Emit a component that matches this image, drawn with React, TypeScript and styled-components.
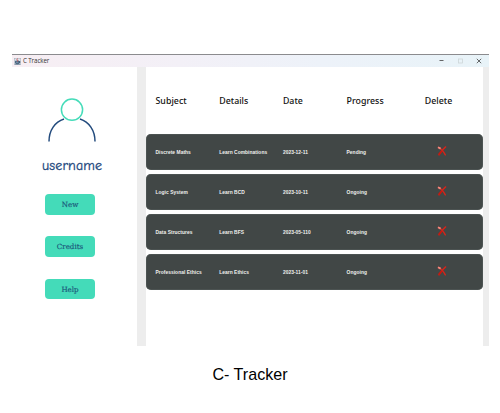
import React from "react";
import styled, { createGlobalStyle } from "styled-components";

const GlobalStyle = createGlobalStyle`
  * { box-sizing: border-box; }
  body { margin: 0; background: #fff; }
`;

const Page = styled.div`
  width: 500px;
  height: 413px;
  padding: 54px 11px 0 12px;
  overflow: hidden;
  background: #fff;
  font-family: "Liberation Sans", sans-serif;
`;

const Window = styled.div`
  width: 477px;
  height: 292px;
  display: flex;
  flex-direction: column;
`;

const TitleBar = styled.header`
  height: 13px;
  flex: none;
  display: flex;
  align-items: center;
  padding: 0 7px 0 2px;
  border-top: 1px solid #8b8b8e;
  background: linear-gradient(90deg, #f7eef3 0%, #f3f0f7 35%, #edf2f9 65%, #e8f3f8 100%);
`;

const Title = styled.span`
  flex: 1;
  margin-left: 2px;
  font: 6.2px/12px "Open Sans", sans-serif;
  letter-spacing: -0.1px;
  color: #333;
`;

const Controls = styled.div`
  display: flex;
  gap: 13.5px;
  svg { display: block; }
`;

const Body = styled.div`
  flex: 1;
  display: flex;
  background: #ededed;
`;

const Sidebar = styled.aside`
  width: 125px;
  display: flex;
  flex-direction: column;
  align-items: flex-start;
  padding: 30px 0 0 33px;
  background: #fff;
`;

const Avatar = styled.svg`
  display: block;
  margin-left: 2px;
`;

const Username = styled.div`
  width: 62px;
  margin: 15px 0 19.3px -3px;
  font: 400 14px/18px "Comic Sans MS", "Comic Neue", "Noto Sans", sans-serif;
  letter-spacing: 0.15px;
  -webkit-text-stroke: 0.3px #1d477c;
  white-space: nowrap;
  color: #1d477c;
`;

const Menu = styled.nav`
  display: flex;
  flex-direction: column;
  gap: 21.7px;
`;

const MenuButton = styled.button`
  width: 50px;
  height: 20.5px;
  padding: 0;
  border: 0;
  border-radius: 4px;
  background: #44dbb9;
  color: #1b567a;
  -webkit-text-stroke: 0.15px #1b567a;
  font: 7.1px/21px "Century Schoolbook", "DejaVu Serif", serif;
`;

const Main = styled.main`
  width: 337px;
  margin-left: 9px;
  display: flex;
  flex-direction: column;
  gap: 4px;
  background: #fff;
`;

const gridColumns = "63.7px 63.7px 63.7px 63.7px 1fr";

const HeaderRow = styled.div`
  height: 63px;
  display: grid;
  grid-template-columns: ${gridColumns};
  padding: 26px 0 0 9.5px;
  font: 500 8.8px/16px "Noto Sans", sans-serif;
  letter-spacing: 0.03px;
  color: #111;
`;

const HeaderCell = styled.span<{ $last?: boolean }>`
  padding-left: ${(p) => (p.$last ? "14.5px" : "0")};
`;

const TaskRow = styled.div`
  height: 36px;
  display: grid;
  grid-template-columns: ${gridColumns};
  align-items: center;
  padding-left: 9.5px;
  border-radius: 5px;
  background: #414746;
  box-shadow: inset 0 0 0 0.5px #59605e;
  font: bold 4.9px/8px "Liberation Sans", sans-serif;
  letter-spacing: 0.04px;
  color: #f0f0ee;
`;

const TaskCell = styled.span`
  padding-top: 1.5px;
  white-space: nowrap;
`;

const DeleteIcon = styled.svg`
  display: block;
  margin: -2px 0 0 26.5px;
`;

const Caption = styled.div`
  margin-top: 18px;
  padding-right: 1px;
  text-align: center;
  font-size: 16.1px;
  line-height: 20px;
  color: #000;
`;

const tasks = [
  ["Discrete Maths", "Learn Combinations", "2023-12-11", "Pending"],
  ["Logic System", "Learn BCD", "2023-10-11", "Ongoing"],
  ["Data Structures", "Learn BFS", "2023-05-110", "Ongoing"],
  ["Professional Ethics", "Learn Ethics", "2023-11-01", "Ongoing"],
];

const headers = ["Subject", "Details", "Date", "Progress", "Delete"];

function JavaIcon() {
  return (
    <svg width="7" height="7" viewBox="0 0 14 14" fill="none">
      <rect x="0.5" y="0.5" width="13" height="13" fill="#dfe5eb" stroke="#9daab7" />
      <path d="M3 6h7v4c0 2-6 2-7 0V6zM10 7h2v2h-2M2 12h10" fill="#718ca4" stroke="#304e6b" strokeWidth="1.4" />
      <path d="M7 1c-3 3 2 3 0 6" stroke="#d04445" strokeWidth="1.7" />
    </svg>
  );
}

function CrossIcon() {
  return (
    <DeleteIcon width="10" height="10" viewBox="0 0 10 10" fill="none">
      <path d="M8.6.9C6.2 3 3.8 5.8 2 8.8" stroke="#d3251a" strokeWidth="1.4" strokeLinecap="round" />
      <path d="M1.4 1.4C3.5 2.3 6.2 5 8.3 8.9" stroke="#d3251a" strokeWidth="1.4" strokeLinecap="round" />
      <path d="M4.7 5.1 1.6 8.9" stroke="#c01b12" strokeWidth="2" />
      <path d="M1 1.3 3.6 2.6" stroke="#f38a80" strokeWidth="1.8" />
    </DeleteIcon>
  );
}

export default function App() {
  return (
    <Page>
      <GlobalStyle />
      <Window>
        <TitleBar>
          <JavaIcon />
          <Title>C Tracker</Title>
          <Controls>
            <svg width="5" height="6" viewBox="0 0 5 6"><path d="M.5 2.5h4" stroke="#555" strokeWidth=".9" /></svg>
            <svg width="5" height="6" viewBox="0 0 5 6"><rect x=".5" y="1" width="4" height="4" fill="none" stroke="#cdd5d8" strokeWidth=".8" /></svg>
            <svg width="6" height="6" viewBox="0 0 6 6"><path d="m.8.8 4.4 4.4M5.2.8.8 5.2" stroke="#444" strokeWidth=".8" /></svg>
          </Controls>
        </TitleBar>
        <Body>
          <Sidebar>
            <Avatar width="50" height="45" viewBox="0 0 50 45" fill="none">
              <path d="M2 44.5C2 33 8 25 17 22M33 22c9 3 15 11 15 22.5" stroke="#234b7d" strokeWidth="1.5" />
              <circle cx="25" cy="12.7" r="10.6" stroke="#45dcb9" strokeWidth="1.5" />
            </Avatar>
            <Username>username</Username>
            <Menu>
              <MenuButton>New</MenuButton>
              <MenuButton>Credits</MenuButton>
              <MenuButton>Help</MenuButton>
            </Menu>
          </Sidebar>
          <Main>
            <HeaderRow>
              {headers.map((name) => (
                <HeaderCell key={name} $last={name === "Delete"}>{name}</HeaderCell>
              ))}
            </HeaderRow>
            {tasks.map((task) => (
              <TaskRow key={task[0]}>
                {task.map((value) => <TaskCell key={value}>{value}</TaskCell>)}
                <CrossIcon />
              </TaskRow>
            ))}
          </Main>
        </Body>
      </Window>
      <Caption>C- Tracker</Caption>
    </Page>
  );
}
